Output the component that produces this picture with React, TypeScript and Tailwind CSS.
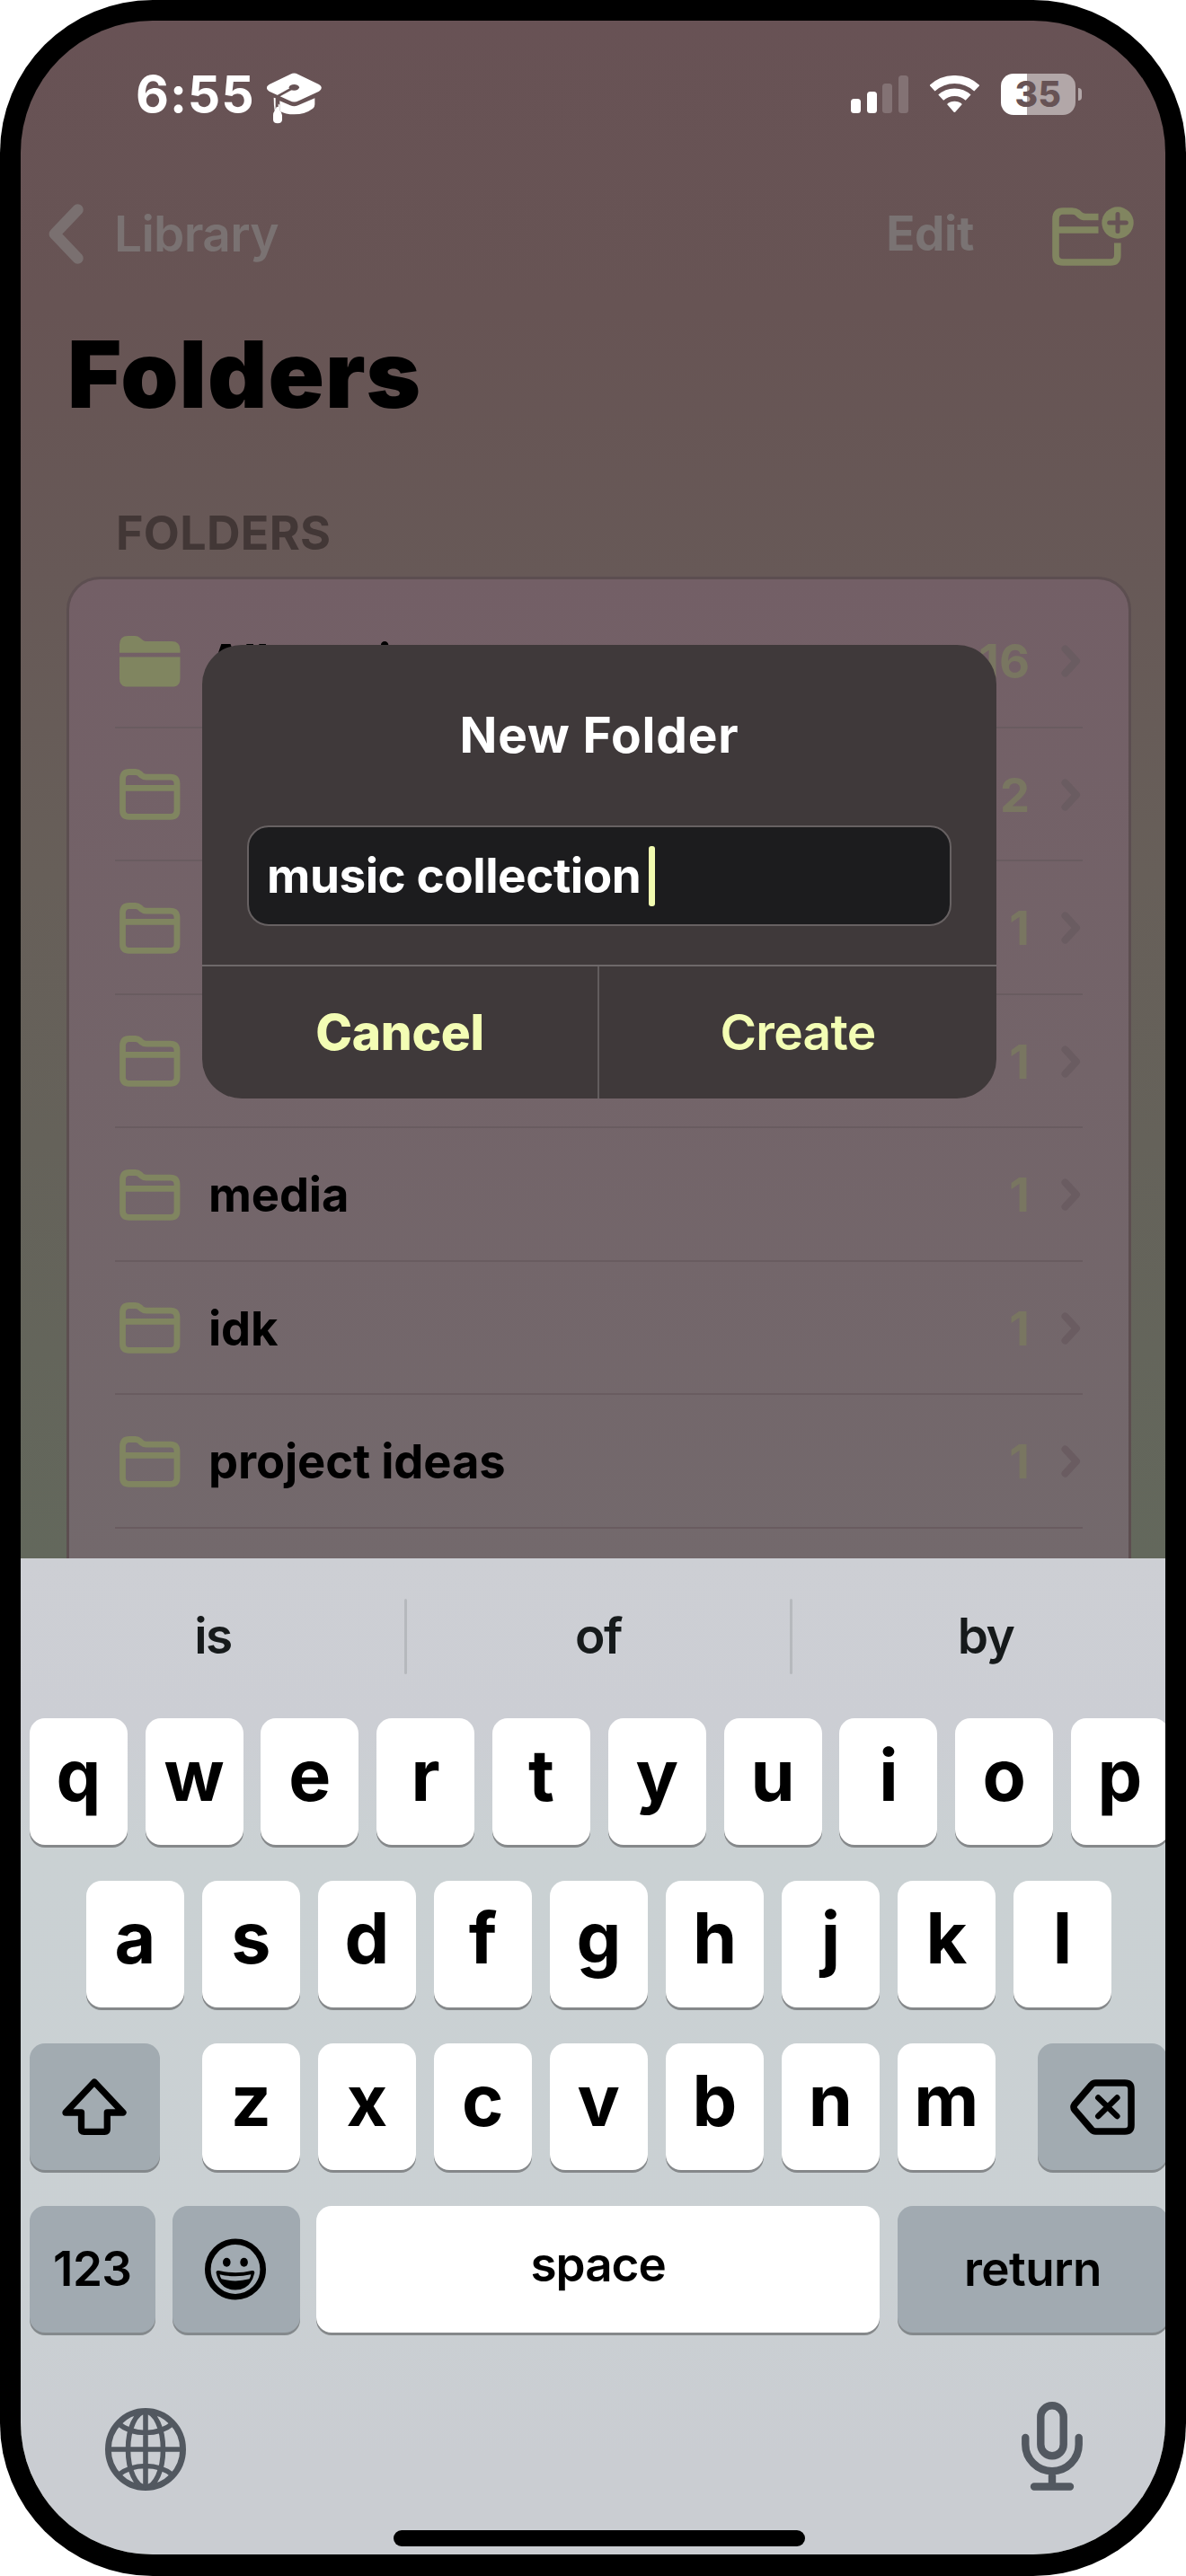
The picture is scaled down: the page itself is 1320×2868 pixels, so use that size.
import type { ReactNode } from "react";

const folders = [
  { id: 1, name: "All music", count: 16, filled: true },
  { id: 2, name: "", count: 2 },
  { id: 3, name: "", count: 1 },
  { id: 4, name: "", count: 1 },
  { id: 5, name: "media", count: 1 },
  { id: 6, name: "idk", count: 1 },
  { id: 7, name: "project ideas", count: 1 },
];

function GraduationCap() {
  return (
    <svg className="mt-[9px] ml-[13px] h-[57px] w-[61px]" viewBox="50 62 183 171" preserveAspectRatio="none">
      <path
        fill="#fff"
        d="M128 67 Q141 60 154 67 L224 101 Q241 112 224 124 L156 156 Q141 163 127 156 L58 124 Q41 112 58 101 Z"
      />
      <path fill="#fff" d="M93 156 L128 171 Q141 177 154 171 L210 147 V168 Q210 176 204 181 Q178 201 141 201 Q112 201 93 190 Z" />
      <path fill="#fff" d="M73 145 L79 147 V184 L87 165 L93 170 V188 Q101 195 101 204 V219 Q101 231 86 231 Q71 231 71 219 V204 Q71 196 76 189 Q73 170 73 145Z" />
      <ellipse cx="141" cy="111" rx="17" ry="10" fill="#675355" />
      <path d="M136 113 L84 142 V176" fill="none" stroke="#675355" strokeWidth="8" strokeLinejoin="round" />
    </svg>
  );
}

function Wifi() {
  return (
    <svg className="h-[42px] w-[55px]" viewBox="0 0 55 42">
      <g fill="none" stroke="#fff">
        <path d="M2.5 14.3 A36.5 36.5 0 0 1 52.3 14.3" strokeWidth="9" />
        <path d="M12.2 24.7 A22.3 22.3 0 0 1 42.6 24.7" strokeWidth="8.6" />
      </g>
      <path d="M19 32 A12.3 12.3 0 0 1 35.8 32 L28.4 40.6 Q27.4 41.6 26.4 40.6 Z" fill="#fff" />
    </svg>
  );
}

function StatusBar() {
  return (
    <div className="flex h-[163px] shrink-0 items-center pr-[93px] pl-[128px]">
      <span className="text-[57px] leading-none font-bold tracking-[0.9px] text-white">6:55</span>
      <GraduationCap />
      <div className="ml-auto flex items-center gap-[24px]">
        <div className="flex h-[42px] items-end gap-[6.6px]">
          <span className="h-[16px] w-[11px] rounded-[3.5px] bg-white" />
          <span className="h-[24px] w-[11px] rounded-[3.5px] bg-white" />
          <span className="h-[33px] w-[11px] rounded-[3.5px] bg-[#837274]" />
          <span className="h-[42px] w-[11px] rounded-[3.5px] bg-[#837274]" />
        </div>
        <Wifi />
        <div className="flex items-center gap-[3px]">
          <div className="flex h-[46px] w-[83px] items-center justify-center rounded-[14px] bg-[linear-gradient(90deg,#fff_0_29px,#b2a7a8_29px)]">
            <span className="text-[39px] leading-none font-extrabold tracking-[0.5px] text-[#675355]">35</span>
          </div>
          <span className="h-[14px] w-[4px] rounded-r-full bg-[#b2a7a8]" />
        </div>
      </div>
    </div>
  );
}

function NavBar() {
  return (
    <div className="flex h-[149px] shrink-0 items-center pr-[35px] pl-[31px]">
      <svg className="h-[67px] w-[39px]" viewBox="0 0 39 67" fill="none">
        <path d="M32.5 6.5 L6.8 33.5 L32.5 60.5" stroke="#7a7070" strokeWidth="12.5" strokeLinecap="round" strokeLinejoin="round" />
      </svg>
      <span className="ml-[34px] text-[55px] leading-none font-semibold tracking-[-0.7px] text-[#7a7272]">Library</span>
      <span className="mr-[87px] ml-auto text-[53px] leading-none font-bold tracking-[-0.4px] text-[#7a7373]">Edit</span>
      <svg className="mt-[5px] h-[67px] w-[91px]" viewBox="0 0 91 67" fill="none">
        <path
          d="M51.5 11.5 H37 Q33 11.5 30.5 9 L28.5 7 Q26 5 22 5 H12 Q4 5 4 13.5 V54.5 Q4 62 12 62 H65 Q72.8 62 72.8 54 V40.6 M4 26 H51.5"
          stroke="#818560"
          strokeWidth="7.6"
        />
        <circle cx="73" cy="18" r="17.7" fill="#818560" />
        <path d="M73 8.5 V27.5 M63.7 18 H82.3" stroke="#675455" strokeWidth="5" strokeLinecap="round" />
      </svg>
    </div>
  );
}

function FolderIcon({ filled }: { filled?: boolean }) {
  return (
    <svg className="h-[57px] w-[68px] shrink-0" viewBox="0 0 68 57" fill="none">
      {filled ? (
        <path
          fill="#808560"
          d="M0 18.7 V9.5 Q0 0 9.5 0 H17 Q20.5 0 23 2.2 L26 4.8 Q27.5 6 30 6 H58 Q67.5 6 67.5 15.5 V18.7 Z M0 23.4 H67.5 V47.5 Q67.5 56.6 58.5 56.6 H9 Q0 56.6 0 47.5 Z"
        />
      ) : (
        <path
          stroke="#808560"
          strokeWidth="6.8"
          d="M3.5 11.5 Q3.5 3.5 11 3.5 H17.5 Q20.5 3.5 22.5 5.3 L24.5 7.2 Q26.8 9.2 30 9.2 H56.5 Q64 9.2 64 16.8 V46 Q64 53.3 56.8 53.3 H10.7 Q3.5 53.3 3.5 46 Z M3.5 21.3 H64"
        />
      )}
    </svg>
  );
}

function FolderList() {
  return (
    <div className="mr-[38px] ml-[51px] flex-1 rounded-t-[37px] border-3 border-b-0 border-[#5c4e50] bg-linear-to-b from-[#735f66] to-[#73696c] px-[51px] pt-[17px]">
      {folders.map((f) => (
        <div key={f.id} className="flex h-[148.5px] items-center border-b-2 border-[#695c60] pt-[2px] pr-[2px] pl-[5px]">
          <FolderIcon filled={f.filled} />
          <span className="ml-[31px] text-[52.5px] leading-none font-bold tracking-[-0.15px] text-black">{f.name}</span>
          <span className="ml-auto text-[52.5px] leading-none font-bold text-[#797661]">{f.count}</span>
          <svg className="ml-[35px] h-[36px] w-[22px]" viewBox="0 0 22 36" fill="none">
            <path d="M4.5 4.5 L17 18 L4.5 31.5" stroke="#6a5c61" strokeWidth="8" strokeLinecap="round" strokeLinejoin="round" />
          </svg>
        </div>
      ))}
    </div>
  );
}

function NewFolderDialog() {
  return (
    <div className="absolute top-[695px] left-[202px] flex h-[505px] w-[884px] flex-col overflow-hidden rounded-[44px] bg-[#3f393a]">
      <h2 className="flex h-[201px] items-center justify-center text-[55px] leading-none font-bold tracking-[0.8px] text-white">New Folder</h2>
      <div className="mx-[50px] flex h-[112px] items-center rounded-[24px] border-2 border-[#676162] bg-[#1c1c1e] pl-[20px]">
        <span className="text-[53px] leading-none font-bold tracking-[-0.45px] text-white">music collection</span>
        <span className="ml-[9px] h-[67px] w-[7px] rounded-[3px] bg-[#f1fbb0]" />
      </div>
      <div className="mt-[43px] grid flex-1 grid-cols-2 border-t-2 border-[#6e696a] text-[55px] leading-none text-[#f3fdb4]">
        <button className="flex items-center justify-center border-r-2 border-[#625d5e] font-extrabold tracking-[-0.3px]">Cancel</button>
        <button className="flex items-center justify-center font-semibold tracking-[-0.7px]">Create</button>
      </div>
    </div>
  );
}

function LetterKey({ children }: { children: ReactNode }) {
  return (
    <div className="flex h-[141px] w-[109px] shrink-0 items-center justify-center rounded-[17px] bg-white pb-[14px] text-[79px] leading-none font-bold text-black shadow-[0_3px_0_#85888a]">
      {children}
    </div>
  );
}

function ShiftKey() {
  return (
    <div className="mr-[27px] flex h-[141px] w-[145px] shrink-0 items-center justify-center rounded-[17px] bg-[#a2abb1] shadow-[0_3px_0_#84898c]">
      <svg className="h-[63px] w-[72px]" viewBox="0 0 72 63" fill="none">
        <path
          d="M36 4 L68 38 H50.3 V56.5 Q50.3 59.3 47.5 59.3 H24.5 Q21.5 59.3 21.5 56.5 V38 H4 Z"
          stroke="#000"
          strokeWidth="7.3"
          strokeLinejoin="round"
        />
      </svg>
    </div>
  );
}

function DeleteKey() {
  return (
    <div className="ml-[27px] flex h-[141px] w-[144px] shrink-0 items-center justify-center rounded-[17px] bg-[#a2abb1] shadow-[0_3px_0_#84898c]">
      <svg className="h-[62px] w-[72px]" viewBox="0 0 72 62" fill="none" stroke="#000" strokeLinecap="round">
        <path
          d="M28.5 4 H61 Q68 4 68 11 V51 Q68 58 61 58 H28.5 Q25.5 58 23.5 55.5 L5 34 Q3 31 5 28 L23.5 6.5 Q25.5 4 28.5 4Z"
          strokeWidth="7.5"
        />
        <path d="M31.3 20.5 L52.3 41 M52.3 20.5 L31.3 41" strokeWidth="6.5" />
      </svg>
    </div>
  );
}

function EmojiKey() {
  return (
    <div className="mr-[17.7px] flex h-[141px] w-[142px] shrink-0 items-center justify-center rounded-[17px] bg-[#a1aab1] shadow-[0_3px_0_#84898c]">
      <svg className="mr-[3px] h-[69px] w-[68px]" viewBox="0 0 68 69">
        <circle cx="34" cy="34.5" r="30.7" fill="none" stroke="#000" strokeWidth="6.6" />
        <ellipse cx="24.3" cy="26.8" rx="4.3" ry="5" />
        <ellipse cx="43.6" cy="26.8" rx="4.3" ry="5" />
        <path d="M12.5 38 Q12.5 35.5 15.5 36 Q34 40.5 52.5 36 Q55.5 35.5 55.3 38.5 Q51 57.5 34 57.5 Q16.5 57.5 12.5 38Z" />
        <path d="M16.5 40.2 Q34 44.5 51.3 40.2 Q51 43 49.5 45.3 Q34 49.5 18.5 45.3 Q17 43 16.5 40.2Z" fill="#a1aab1" />
      </svg>
    </div>
  );
}

function Globe() {
  return (
    <svg className="h-[92px] w-[90px]" viewBox="0 0 90 92" fill="none" stroke="#525860" strokeWidth="5.6">
      <ellipse cx="45" cy="46" rx="41.6" ry="42.6" strokeWidth="6.8" />
      <ellipse cx="45" cy="46" rx="19.5" ry="42" />
      <path d="M45 3 V89 M3 46 H87 M15 17.5 Q27 27.5 45 27.5 Q63 27.5 75 17.5 M15 74.5 Q27 64.5 45 64.5 Q63 64.5 75 74.5" />
    </svg>
  );
}

function Mic() {
  return (
    <svg className="h-[99px] w-[68px]" viewBox="0 0 68 99" fill="none" stroke="#525860" strokeWidth="8.4" strokeLinecap="round">
      <rect x="21.3" y="4.3" width="25.4" height="56" rx="12.7" />
      <path d="M4.3 40 V47.5 A29.7 29.7 0 0 0 63.7 47.5 V40 M34 78 V93 M14 94.5 H54" />
    </svg>
  );
}

function Keyboard() {
  return (
    <div className="flex h-[1109px] shrink-0 flex-col bg-[linear-gradient(180deg,#cdcfd4_0,#ccced4_180px,#cad1d3_330px,#cad0d3_800px,#cacdd2_1000px,#cacdd2_100%)]">
      <div className="mb-[5px] ml-px flex h-[173px] shrink-0 items-center text-[55px] leading-none font-semibold tracking-[-1.5px] text-[#161a1b]">
        <span className="w-[426px] shrink-0 text-center">is</span>
        <span className="h-[84px] w-[3px] shrink-0 rounded-full bg-[#b6b9bd]" />
        <span className="w-[426px] shrink-0 text-center">of</span>
        <span className="h-[84px] w-[3px] shrink-0 rounded-full bg-[#b6b9bd]" />
        <span className="w-[430px] shrink-0 text-center">by</span>
      </div>
      <div className="flex flex-col gap-[40px] pl-[9.8px]">
        <div className="flex gap-[19.8px]">
          {"qwertyuiop".split("").map((k) => (
            <LetterKey key={k}>{k}</LetterKey>
          ))}
        </div>
        <div className="flex gap-[20px] pl-[63.2px]">
          {"asdfghjkl".split("").map((k) => (
            <LetterKey key={k}>{k}</LetterKey>
          ))}
        </div>
        <div className="flex gap-[20px]">
          <ShiftKey />
          {"zxcvbnm".split("").map((k) => (
            <LetterKey key={k}>{k}</LetterKey>
          ))}
          <DeleteKey />
        </div>
        <div className="flex text-[53px] leading-none font-semibold tracking-[-0.6px] text-black">
          <div className="mr-[19.7px] flex h-[141px] w-[140px] shrink-0 items-center justify-center rounded-[17px] bg-[#a1aab1] text-[53px] shadow-[0_3px_0_#84898c]">123</div>
          <EmojiKey />
          <div className="mr-[19.8px] flex h-[141px] w-[627px] shrink-0 items-center justify-center rounded-[17px] bg-white pb-[10px] tracking-[-1px] shadow-[0_3px_0_#85888a]">space</div>
          <div className="flex h-[141px] w-[301px] shrink-0 items-center justify-center rounded-[17px] bg-[#a1aab1] shadow-[0_3px_0_#84898c]">return</div>
        </div>
      </div>
      <div className="mt-[77px] flex justify-between pr-[92px] pl-[94px]">
        <div className="pt-[7px]">
          <Globe />
        </div>
        <Mic />
      </div>
      <div className="mt-[44px] ml-[415px] h-[18px] w-[458px] shrink-0 rounded-full bg-black" />
    </div>
  );
}

export default function App() {
  return (
    <div className="h-[2868px] w-[1320px] overflow-hidden bg-white font-['Inter',sans-serif]">
      <div className="h-full rounded-[170px] bg-black px-[23px] pt-[23px] pb-[24px]">
        <div className="relative flex h-full flex-col overflow-hidden rounded-[147px] bg-[linear-gradient(180deg,#685255_0,#675454_320px,#675957_620px,#675f59_950px,#65625a_1250px,#63685c_1712px)]">
          <div className="flex h-[1712px] shrink-0 flex-col overflow-hidden">
            <StatusBar />
            <NavBar />
            <h1 className="flex h-[163px] shrink-0 items-center pl-[52px] text-[103px] leading-none font-black tracking-[1px] text-black">Folders</h1>
            <div className="mt-[48px] flex h-[96px] shrink-0 items-center pl-[106px] text-[52px] leading-none font-bold tracking-[0.3px] text-[#423736]">FOLDERS</div>
            <FolderList />
          </div>
          <Keyboard />
          <NewFolderDialog />
        </div>
      </div>
    </div>
  );
}
